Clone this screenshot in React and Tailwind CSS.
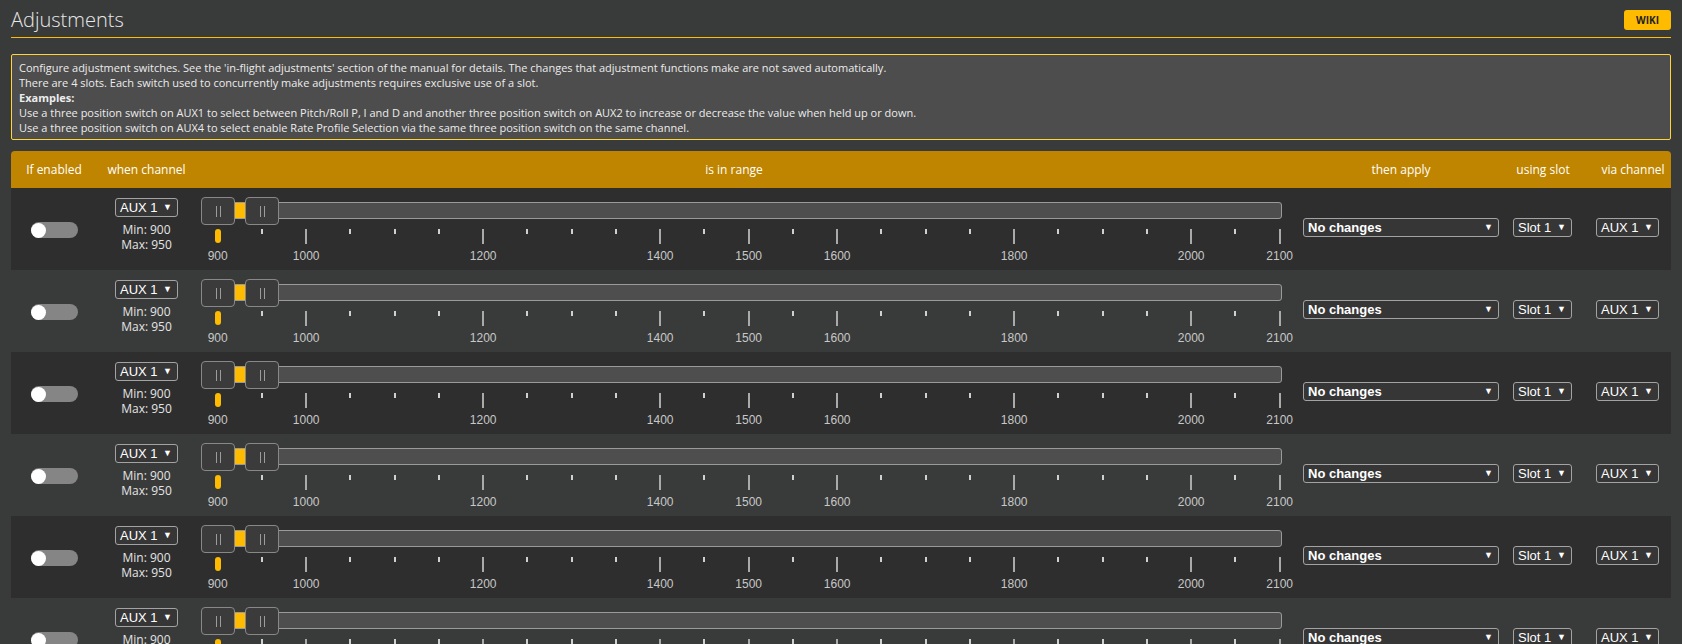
const LABELED = [900, 1000, 1200, 1400, 1500, 1600, 1800, 2000, 2100]
const PIPS = Array.from({ length: 25 }, (_, i) => 900 + i * 50)
const ROWS = [0, 1, 2, 3, 4, 5]

function pipX(v) {
  return 16.7 + (v - 900) * 0.885
}

function FakeSelect({ label, width, bold }) {
  return (
    <div
      className={`flex h-[19px] items-center justify-between rounded-[3px] border border-[#a3a3a3] bg-[#363636] pl-[4px] pr-[5px] font-['Liberation_Sans',Arial,sans-serif] text-[13px] leading-none text-white ${
        bold ? 'font-bold' : ''
      }`}
      style={{ width }}
    >
      <span>{label}</span>
      <span className="text-[9px]">▼</span>
    </div>
  )
}

function Handle({ left }) {
  return (
    <div
      className="absolute top-[9px] flex h-[28px] w-[34px] items-center justify-center gap-[3px] rounded-[4px] border border-[#888] bg-[#3b3b3b]"
      style={{ left }}
    >
      <div className="h-[11px] w-px bg-[#9c9c9c]" />
      <div className="h-[11px] w-px bg-[#9c9c9c]" />
    </div>
  )
}

function RangeSlider() {
  return (
    <div className="relative h-[82px] w-[1081px]">
      <div className="absolute left-0 top-[14px] h-[17px] w-[1081px] rounded-[3px] border border-[#9a9a9a] bg-[#4e4e4e]" />
      <div className="absolute left-[34px] top-[15px] h-[15px] w-[11px] bg-[#ffbb00]" />
      <Handle left={0} />
      <Handle left={44} />
      {PIPS.map((v) => {
        const x = pipX(v)
        const big = LABELED.includes(v)
        if (v === 900) {
          return (
            <div
              key={v}
              className="absolute top-[41px] h-[14px] w-[6px] rounded-full bg-[#ffbb00]"
              style={{ left: x - 3 }}
            />
          )
        }
        return (
          <div
            key={v}
            className={`absolute top-[41px] w-[2px] ${big ? 'h-[15px] bg-[#aaa]' : 'h-[5px] bg-[#d0d0d0]'}`}
            style={{ left: x - 1 }}
          />
        )
      })}
      {LABELED.map((v) => (
        <div
          key={v}
          className="absolute top-[61px] w-[40px] text-center font-['Liberation_Sans',Arial,sans-serif] text-[12px] leading-[14px] text-[#c8c8c8]"
          style={{ left: pipX(v) - 20 }}
        >
          {v}
        </div>
      ))}
    </div>
  )
}

function Row({ dark }) {
  return (
    <div
      className={`grid h-[82px] grid-cols-[86px_99px_1094px_222px_66px_93px] ${dark ? 'bg-[#2e2e2e]' : ''}`}
    >
      <div className="flex items-center justify-center pt-[2px]">
        <div className="relative h-[16px] w-[47px] rounded-full bg-[#858585]">
          <div className="absolute left-0 top-[0.5px] h-[15px] w-[15px] rounded-full bg-white" />
        </div>
      </div>
      <div className="flex flex-col items-center pt-[10px]">
        <FakeSelect label="AUX 1" width={63} />
        <div className="mt-[5px] text-[12px] leading-[15px] text-[#e4e4e4]">Min: 900</div>
        <div className="text-[12px] leading-[15px] text-[#e4e4e4]">Max: 950</div>
      </div>
      <div className="pl-[5px]">
        <RangeSlider />
      </div>
      <div className="flex items-center justify-center pb-[3px]">
        <FakeSelect label="No changes" width={196} bold />
      </div>
      <div className="flex items-center justify-center pb-[3px] pr-[5px]">
        <FakeSelect label="Slot 1" width={59} />
      </div>
      <div className="flex items-center justify-center pb-[3px] pl-[6px]">
        <FakeSelect label="AUX 1" width={63} />
      </div>
    </div>
  )
}

export default function App() {
  return (
    <div className="min-h-screen bg-[#393b3a] px-[11px] font-['Open_Sans','Liberation_Sans',sans-serif] text-[#e6e6e6]">
      <div className="flex h-[38px] items-center justify-between border-b border-[#ffbb00]">
        <h1 className="pt-[2px] text-[20px] font-light leading-[28px] text-[#e8e8e8]">Adjustments</h1>
        <a className="mt-[3px] rounded-[3px] bg-[#ffbb00] px-[12px] py-[4px] text-[10px] font-bold leading-[12px] text-[#222]">
          WIKI
        </a>
      </div>

      <div className="mt-[16px] rounded-[2px] border border-[#ffd43a] bg-[#4d4d4d] px-[7px] pb-[4px] pt-[5px] text-[11px] leading-[15px] text-[#ececec]">
        <p>
          Configure adjustment switches. See the 'in-flight adjustments' section of the manual for details. The
          changes that adjustment functions make are not saved automatically.
        </p>
        <p>There are 4 slots. Each switch used to concurrently make adjustments requires exclusive use of a slot.</p>
        <p className="font-bold">Examples:</p>
        <p>
          Use a three position switch on AUX1 to select between Pitch/Roll P, I and D and another three position
          switch on AUX2 to increase or decrease the value when held up or down.
        </p>
        <p>
          Use a three position switch on AUX4 to select enable Rate Profile Selection via the same three position
          switch on the same channel.
        </p>
      </div>

      <div className="mt-[11px]">
        <div className="grid h-[37px] grid-cols-[86px_99px_1094px_222px_66px_93px] items-center rounded-t-[4px] bg-[#bf8500] text-center text-[12px] text-white">
          <div>If enabled</div>
          <div>when channel</div>
          <div className="pr-[18px]">is in range</div>
          <div>then apply</div>
          <div className="pr-[4px]">using slot</div>
          <div className="pl-[17px]">via channel</div>
        </div>
        {ROWS.map((i) => (
          <Row key={i} dark={i % 2 === 0} />
        ))}
      </div>
    </div>
  )
}
